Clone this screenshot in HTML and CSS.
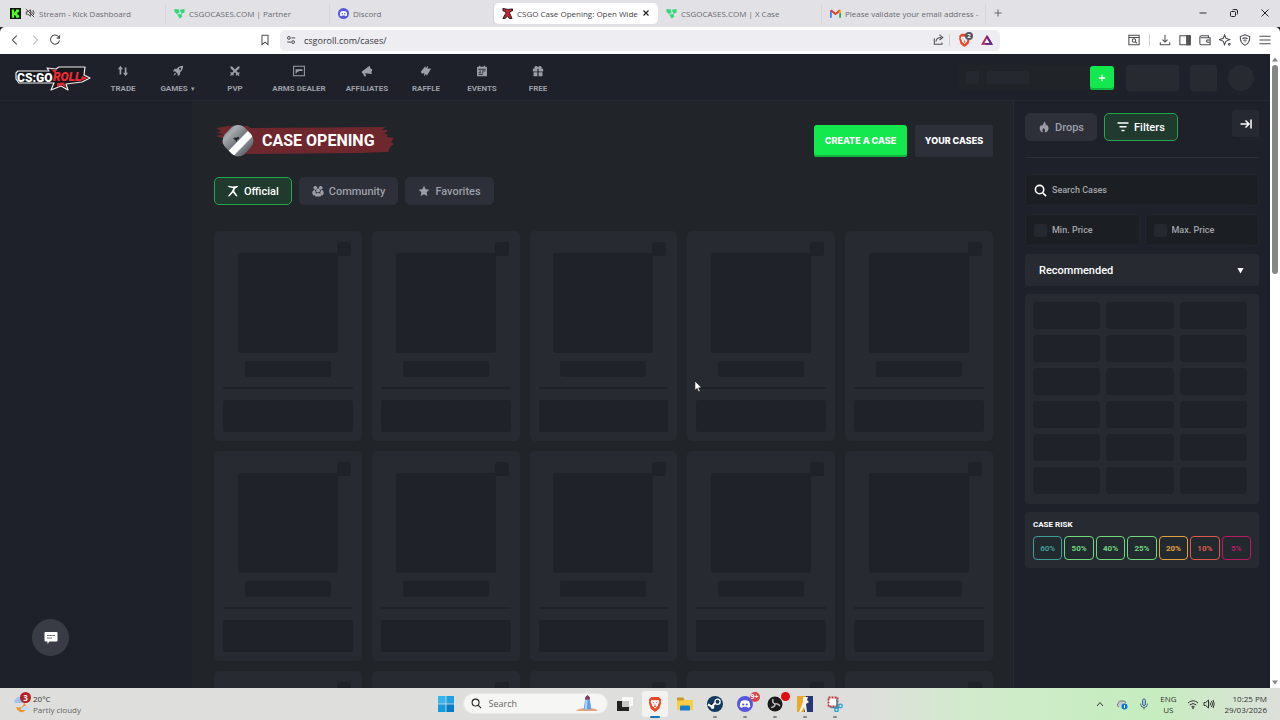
FILE: index.html
```html
<!DOCTYPE html>
<html lang="en">
<head>
<meta charset="utf-8">
<title>CSGO Case Opening</title>
<link rel="stylesheet" href="styles.css">
</head>
<body>
<svg class="defs" aria-hidden="true">
  <symbol id="trefoil" viewBox="0 0 12 12"><path d="M.5 1l5 .5L6 5.500 3 6.500.5 4zM6.500 2L11.500 1v4L8 6.500zM3.500 7l4.500-.5L9 9.500l-3 2z" fill="#35d878"/></symbol>
  <symbol id="discord" viewBox="0 0 16 16"><circle cx="8" cy="8" r="8" fill="#5558dc"/><path d="M4 5.200Q8 3.500 12 5.200 13.500 8 13.200 10.800L11 12l-.8-1.200H5.800L5 12l-2.200-1.200Q2.500 8 4 5.200z" fill="#fff"/><circle cx="6.200" cy="8.500" r="1.100" fill="#5558dc"/><circle cx="9.800" cy="8.500" r="1.100" fill="#5558dc"/></symbol>
  <symbol id="brave" viewBox="0 0 16 18"><path d="M4 1h8l1.500 1.500L15 4l-.6 2 .6 1-2 7-5 4-5-4L1 7l.6-1L1 4l1.500-1.500z" fill="#ee4623"/><path d="M4 4.500l3 .3h2l3-.3 1 2.500-1.800 2.800.3 1.200L8 14l-3.500-3 .3-1.200L3 7z" fill="#fff"/><path d="M5 6.500l2 .8-.5 1zM11 6.500l-2 .8.5 1zM8 8l.6 2.500H7.400zM6.200 11.300L8 10.600l1.800.7L8 12.600z" fill="#ee4623"/></symbol>
  <symbol id="runner" viewBox="0 0 12 12"><path d="M.5.800L6 1.500 11.500.8 10 2.500 8 3.800 7.200 6l3.500 5.200H9L6 7.500l-3.500 3.700H.8L4.700 6.500 6.300 3.200 2 2.300z"/></symbol>
</svg>

<header class="tabstrip">
  <div class="tab">
    <svg class="fav" viewBox="0 0 12 12"><path d="M0 0h12v12H0z" fill="#071407"/><path d="M2 1.500h2.500v3h1V3.500h1v-2H10V4H9v1H8v2h1v1h1v2.500H6.500v-2h-1v-1h-1v3H2z" fill="#4cff20"/></svg>
    <svg class="mute" viewBox="0 0 12 12" fill="none" stroke="#444" stroke-width="1.100"><path d="M1.500 4.500h2L6.500 2v8l-3-2.500h-2zM8 4q1.500 2 0 4M1 1l10 10M9.500 2.500q2.500 3 .5 6" /></svg>
    <span>Stream - Kick Dashboard</span>
  </div>
  <div class="tab"><svg class="fav"><use href="#trefoil"/></svg><span>CSGOCASES.COM | Partner</span></div>
  <div class="tab"><svg class="fav"><use href="#discord"/></svg><span>Discord</span></div>
  <div class="tab active">
    <svg class="fav" viewBox="0 0 12 12"><path d="M1 .5l5.500 1L11.500 1v2L8.500 4v2l2.500 5.500H8L6 8.500l-2.500 3H1L4 6V4L1 3z" fill="#c52730" stroke="#221518"/></svg>
    <span>CSGO Case Opening: Open Wide</span>
    <button class="plain close" aria-label="Close tab"><svg viewBox="0 0 8 8"><path d="M1.500 1.500l5 5m0-5l-5 5" stroke="#222" stroke-width="1.200"/></svg></button>
  </div>
  <div class="tab"><svg class="fav"><use href="#trefoil"/></svg><span>CSGOCASES.COM | X Case</span></div>
  <div class="tab"><svg class="fav" viewBox="0 0 12 12"><path d="M1 10.500V2.500" stroke="#4285f4" stroke-width="2"/><path d="M11 10.500V2.500" stroke="#34a853" stroke-width="2"/><path d="M1 2.500l5 4 5-4" stroke="#e33b2e" stroke-width="2.200" fill="none"/><path d="M10 3.200l2-1.400v3l-2 1.200z" fill="#fbbc04"/></svg><span>Please validate your email address -</span></div>
  <button class="plain newtab" aria-label="New tab"><svg viewBox="0 0 10 10"><path d="M5 1.500v7M1.500 5h7" stroke="#666"/></svg></button>
  <div class="wincontrols">
    <button class="plain" aria-label="Minimize"><svg viewBox="0 0 10 10"><path d="M1.500 5h7" stroke="#333"/></svg></button>
    <button class="plain" aria-label="Restore"><svg viewBox="0 0 10 10" fill="none" stroke="#222"><rect x="1.500" y="3.500" width="5" height="5" rx="1"/><path d="M3.500 2q.3-.5 1-.5h2.500q1.500 0 1.500 1.500v2.500q0 .7-.5 1"/></svg></button>
    <button class="plain" aria-label="Close"><svg viewBox="0 0 10 10"><path d="M1.500 1.500l7 7m0-7l-7 7" stroke="#222"/></svg></button>
  </div>
</header>

<nav class="toolbar" aria-label="Browser">
  <div class="history">
    <button class="plain" aria-label="Back"><svg viewBox="0 0 14 14"><path d="M9 2L4 7l5 5" /></svg></button>
    <button class="plain dim" aria-label="Forward"><svg viewBox="0 0 14 14"><path d="M5 2l5 5-5 5" /></svg></button>
    <button class="plain" aria-label="Reload"><svg viewBox="0 0 14 14"><path d="M12 4.500A5.300 5.300 0 1 0 12.300 7.500M12.300 1.500v3.300H9"/></svg></button>
    <button class="plain bookmark" aria-label="Bookmark"><svg viewBox="0 0 14 14"><path d="M3.500 1.500h7v11L7 9.500l-3.500 3z"/></svg></button>
  </div>
  <div class="address">
    <svg viewBox="0 0 12 12"><path d="M6.500 3.500H11M1.500 8.500H6"/><circle cx="3.500" cy="3.500" r="1.700"/><circle cx="8.500" cy="8.500" r="1.700"/></svg>
    <input type="text" aria-label="Address" value="csgoroll.com/cases/">
    <button class="plain share" aria-label="Share"><svg viewBox="0 0 14 14"><path d="M1.500 5v7h9v-2M3.500 9q0-5 6-5M7.500 1l4 3-4 3"/></svg></button>
    <span class="vr"></span>
    <span class="shield"><svg><use href="#brave"/></svg><b>2</b></span>
    <svg class="bat" viewBox="0 0 14 14"><path d="M7 3L2 11.500h10z" stroke="#b02353" stroke-width="2.200"/><path d="M7 3l5 8.500H5" stroke="#5d2b8b" stroke-width="2.200"/></svg>
  </div>
  <div class="tools">
    <button class="plain" aria-label="Search page"><svg viewBox="0 0 14 14"><path d="M1 1.500h12v11H1zM1 4h12"/><circle cx="7" cy="7.500" r="2"/><path d="M8.500 9l2 2"/></svg></button>
    <span class="vr"></span>
    <button class="plain" aria-label="Downloads"><svg viewBox="0 0 14 14"><path d="M7 1v8M4 6.500l3 3 3-3M1.500 9.500v3h11v-3"/></svg></button>
    <button class="plain" aria-label="Sidebar"><svg viewBox="0 0 14 14"><path d="M1 2h12v10.500H1z"/><path d="M9 2h4v10.500H9z" fill="#555"/></svg></button>
    <button class="plain" aria-label="Wallet"><svg viewBox="0 0 14 14"><path d="M11 4.500V2H3Q1 2 1 4v7q0 1.500 1.500 1.500H13v-8H2M13 7H9.500q-1.300 1.200 0 2.500H13z"/></svg></button>
    <button class="plain" aria-label="AI assistant"><svg viewBox="0 0 14 14"><path d="M6.500 1L8 5l4.500 1.500L8 8.500l-1.500 4L5 8.500 .5 6.500 5 5z"/><circle cx="12" cy="12" r="1"/></svg></button>
    <button class="plain" aria-label="VPN"><svg viewBox="0 0 14 14"><path d="M7 .8L12.500 3q.5 7.500-5.500 10.300Q1 10.500 1.500 3z"/><path d="M4 5.500q3-2 6 0M5 7.500q2-1.200 4 0M6.300 9h1.400"/></svg></button>
    <button class="plain" aria-label="Menu"><svg viewBox="0 0 14 14"><path d="M.5 2.500h13M.5 7h13M.5 11.500h13"/></svg></button>
  </div>
</nav>

<div class="viewport">
  <div class="site">
    <header class="sitebar">
      <a class="logo" href="#" aria-label="CSGORoll">
        <svg viewBox="0 0 76 28">
          <path d="M3 7h31l-2-3 9 1 3-2h26l-1 8 6 3-8 4-16 2 2 6-7-4-10 4 3-7H4l-3-4V9z" fill="#15171c" stroke="#f2eeee" stroke-width="1.200" stroke-linejoin="round"/>
          <path d="M36 5.500l6 .5-2 3zM42 19l7-.5 2 5-4-2.500-5 2zM67 12l6 2-8 3z" fill="#df2832"/>
          <text x="2" y="18" class="logo-main">CS:GO</text>
          <text x="38" y="17" class="logo-roll">ROLL</text>
        </svg>
      </a>
      <nav class="sitenav" aria-label="Main">
        <a href="#"><svg viewBox="0 0 14 14"><path d="M4 1L1 5h2v6h2V5h2zM10 13l3-4h-2V3H9v6H7z"/></svg>TRADE</a>
        <a href="#"><svg viewBox="0 0 14 14"><path d="M13 1Q8 1 5.500 4.500H3L1 7.500l2.500-.3 3.300 3.300L6.500 13l3-2V8.500Q13 6 13 1zM3.500 9L1.500 12.500 5 10.500z"/><circle cx="9.500" cy="4.500" r="1.200" fill="#1e2129"/></svg><span>GAMES <i>▼</i></span></a>
        <a href="#"><svg viewBox="0 0 14 14"><path d="M1.500 1.500L4 2l3 3.300L10 2l2.500-.5L12 4 8.700 7l2 2 1-.7 .8.900-1.200 1.300 1 1.500-1 .8-1.300-1.200-1.500 1-.7-.8.800-1.200L7 8.600 5 10.600l.7 1.200-.8.700-1.400-1L2.200 12.700l-1-.9 1.200-1.300L1.400 9l.9-.8 1.200.8L5.300 7 2 4z"/></svg>PVP</a>
        <a href="#"><svg viewBox="0 0 14 14"><path d="M.7 1.500h12.600v11H.7z" fill="none" stroke="#9c9fa7" stroke-width="1.200"/><path d="M3 5h8v2H7L6 8H5L4 10H3z"/></svg>ARMS DEALER</a>
        <a href="#"><svg viewBox="0 0 14 14"><path d="M1 7.500L10 1l1 3 2 1v2l-1 .8.8 2.700L5 9.500 6 13H3.500l-1-3.500H1z"/></svg>AFFILIATES</a>
        <a href="#"><svg viewBox="0 0 14 14"><path d="M1 8l5-6.500.8 2L9.500 1 9 4.500 13 4 8 12.500l-1-2L4.500 13 5 9.500 2 10z"/></svg>RAFFLE</a>
        <a href="#"><svg viewBox="0 0 14 14"><path d="M2 2h1.500V1H5v1h4V1h1.500v1H12q.8 0 .8.800V13H1.200V2.800Q1.200 2 2 2z"/><path d="M2.500 5h9M4 7h2M7 7h4M3 9h3M7 9h1.500M3 11h5" stroke="#1e2129"/></svg>EVENTS</a>
        <a href="#"><svg viewBox="0 0 14 14"><path d="M1 4.500h2Q2 1 5 1.200 6.500 1.500 7 3 7.500 1.500 9 1.200 12 1 11 4.500h2v3H7.700V4.500H6.300v3H1zM1.800 8.500h4.500V13H1.800zM7.700 8.500h4.500V13H7.700z"/></svg>FREE</a>
      </nav>
      <div class="account">
        <div class="balance"><span class="coin"></span><span class="amount"></span></div>
        <button class="deposit" aria-label="Deposit"><svg viewBox="0 0 10 10"><path d="M5 1v8M1 5h8" stroke="#fff" stroke-width="1.600"/></svg></button>
        <span class="ph wide"></span><span class="ph"></span><span class="ph avatar"></span>
      </div>
    </header>

    <div class="columns">
      <div class="rail">
        <button class="chat" aria-label="Open chat"><svg viewBox="0 0 16 16"><path d="M2.500 2h11q1 0 1 1v7.500q0 1-1 1H6.500L4.500 14v-2.500h-2q-1 0-1-1V3q0-1 1-1z" fill="#fff"/><path d="M4 5.500h8M4 8h5" stroke="#777a82"/></svg></button>
      </div>

      <main>
        <div class="heading">
          <div class="title">
            <svg class="brush" viewBox="0 0 182 34" preserveAspectRatio="none"><path d="M2 4l12-2h20l3 2 136-1-3 3h6l-4 4h3v3l7 1-3 4 3 2-4 3-2 5-30 1-106 1H33L24 22 6 19l8-3L2 12l8-2-8-1 5-2z" fill="#6f272e"/></svg>
            <svg class="knife" viewBox="0 0 34 34"><defs><linearGradient id="steel" x1="0" y1="0" x2="1" y2="1"><stop offset="0" stop-color="#444a50"/><stop offset=".25" stop-color="#a8adb2"/><stop offset=".5" stop-color="#74797f"/><stop offset=".51" stop-color="#fff"/><stop offset=".66" stop-color="#fff"/><stop offset=".67" stop-color="#858a8f"/><stop offset="1" stop-color="#30353a"/></linearGradient></defs><path d="M17 1q5 0 8 4l5 5q5 7 0 13l-6 7q-7 5-13 0L4 23q-5-6 0-13l5-5q3-4 8-4z" fill="url(#steel)"/><path d="M12 14l6-1v2l-2 1v2l-2-2z" fill="#24282c"/></svg>
            <h1>CASE OPENING</h1>
          </div>
          <button class="create">CREATE A CASE</button>
          <button class="yours">YOUR CASES</button>
        </div>
        <div class="pills">
          <button class="pill on"><svg><use href="#runner"/></svg>Official</button>
          <button class="pill"><svg viewBox="0 0 12 12"><circle cx="3.300" cy="2.800" r="1.900"/><circle cx="8.700" cy="2.800" r="1.900"/><circle cx="6" cy="5.500" r="2"/><path d="M.3 8Q.3 5 3 5l.8 3-.8 2.200H1zM11.700 8Q11.700 5 9 5l-.8 3 .8 2.200h2zM3 10.500Q3 8 6 8t3 2.500L8.500 11.500h-5z"/></svg>Community</button>
          <button class="pill"><svg viewBox="0 0 12 12"><path d="M6 .8l1.600 3.400 3.800.5-2.800 2.600.7 3.800L6 9.200l-3.300 1.900.7-3.800L.6 4.700l3.800-.5z"/></svg>Favorites</button>
        </div>
        <div class="cases" id="cases"></div>
      </main>

      <aside>
        <div class="switch">
          <button class="pill"><svg viewBox="0 0 12 12"><path d="M6.500.5Q5 4 4 5L3 4Q1 6 1.800 8.500 2.500 11 5 11.500 3.500 9 5.500 7q.5 1 1.300 1.200.7 1.500-.3 3.300Q10 11 10.500 8 10.500 5.500 9 3.500L8 5Q8 2 6.500.5z"/></svg>Drops</button>
          <button class="pill on"><svg viewBox="0 0 12 12"><path d="M.5 2h11M2.500 5.800h7M4.500 9.500h3" stroke="#fff" stroke-width="1.500"/></svg>Filters</button>
          <button class="collapse" aria-label="Collapse panel"><svg viewBox="0 0 12 12"><path d="M.5 6h8M5.500 2.500L9 6 5.500 9.500M11 1.500v9" fill="none" stroke="#fff" stroke-width="1.500"/></svg></button>
        </div>
        <div class="filters">
          <label class="field"><svg viewBox="0 0 14 14"><circle cx="6" cy="6" r="4.500"/><path d="M9.500 9.500L13 13"/></svg><input type="text" placeholder="Search Cases" aria-label="Search Cases"></label>
          <div class="prices">
            <label class="field"><span class="coin"></span><input type="text" placeholder="Min. Price" aria-label="Min. Price"></label>
            <label class="field"><span class="coin"></span><input type="text" placeholder="Max. Price" aria-label="Max. Price"></label>
          </div>
          <div class="sort"><select aria-label="Sort"><option>Recommended</option></select><svg viewBox="0 0 8 8"><path d="M.5 1h7L4 7.500z" fill="#fff"/></svg></div>
          <div class="swatches" id="swatches"></div>
          <section class="risk">
            <h2>CASE RISK</h2>
            <div class="chips">
              <button class="r60">60%</button><button class="r50">50%</button><button class="r50">40%</button><button class="r50">25%</button><button class="r20">20%</button><button class="r10">10%</button><button class="r5">5%</button>
            </div>
          </section>
        </div>
      </aside>
    </div>
  </div>
  <div class="scrollbar">
    <svg viewBox="0 0 10 10"><path d="M5 3l3 4H2z"/></svg>
    <span class="thumb"></span>
    <svg viewBox="0 0 10 10"><path d="M5 7l3-4H2z"/></svg>
  </div>
</div>

<footer class="taskbar">
  <div class="weather">
    <span class="wicon"><svg viewBox="0 0 18 20"><path d="M3 13q8 2 8-5 5 7-1 10-5 1-7-5z" fill="#ee9327"/><path d="M2 9q-2-3 1-4 2-4 6-1 4 0 4 5z" fill="#9fc4ee"/><path d="M8 16q-1-3 2-3 2-3 4 0 4 0 3 3z" fill="#c3daf5"/></svg><b>3</b></span>
    <div>20°C<br><span>Partly cloudy</span></div>
  </div>
  <div class="apps">
    <button class="plain app" aria-label="Start"><svg viewBox="0 0 16 16"><path d="M0 0h7.600v7.600H0z" fill="#35b5ec"/><path d="M8.400 0H16v7.600H8.400z" fill="#1ea0e2"/><path d="M0 8.400h7.600V16H0z" fill="#159bdc"/><path d="M8.400 8.400H16V16H8.400z" fill="#087bc6"/></svg></button>
    <label class="tasksearch"><svg viewBox="0 0 12 12" fill="none" stroke="#222" stroke-width="1.200"><circle cx="5" cy="5" r="3.800"/><path d="M7.800 7.800L11 11"/></svg><input type="text" placeholder="Search" aria-label="Search Windows"><svg class="lighthouse" viewBox="0 0 24 18"><path d="M0 17q3-3 8-3h8q5 0 7 3z" fill="#e4a57c"/><path d="M8 15L9.500 5h5L16 15z" fill="#5b9df0"/><path d="M10 5h2l-.5 10H9z" fill="#a9d4ff"/><path d="M9.500 2.500L12 0l2.500 2.500V5h-5z" fill="#803a65"/></svg></label>
    <button class="plain app" aria-label="Task view"><svg viewBox="0 0 16 16"><path d="M5 1h11v9H5z" fill="#fafafa"/><path d="M0 5h12v10H0z" fill="#222"/><path d="M5 5h7v6H5z" fill="#c8c8c7"/></svg></button>
    <button class="plain app current" aria-label="Brave"><svg><use href="#brave"/></svg></button>
    <button class="plain app" aria-label="File Explorer"><svg viewBox="0 0 16 16"><path d="M0 2h6l2 2h8v10H0z" fill="#f8cc46"/><path d="M0 1.500h6L7.500 3 6 4.500H0z" fill="#c99a23"/><path d="M3 10.500q0-1 1-1h8q1 0 1 1v4H3z" fill="#1780ce"/></svg></button>
    <button class="plain app run" aria-label="Steam"><svg viewBox="0 0 16 16"><circle cx="8" cy="8" r="8" fill="#14395f"/><path d="M1 8.500l4 2 3-3.500" stroke="#fff" stroke-width="2"/><circle cx="10.500" cy="5.700" r="2.600" fill="none" stroke="#fff" stroke-width="1.300"/><circle cx="5.500" cy="11" r="1.900" fill="#fff"/></svg></button>
    <button class="plain app run" aria-label="Discord"><svg><use href="#discord"/></svg><b>9+</b></button>
    <button class="plain app run" aria-label="OBS"><svg viewBox="0 0 16 16"><circle cx="8" cy="8" r="7.500" fill="#1a1a1c"/><path d="M8 8Q5 7 6 3M8 8q3-1 5 2M8 8q0 3-4 3.500" stroke="#bbb" stroke-width="1.500" fill="none"/></svg><b class="dot"></b></button>
    <button class="plain app run" aria-label="Counter-Strike 2"><svg viewBox="0 0 16 16"><path d="M0 0h9v16H0z" fill="#eba92b"/><path d="M9 0h7v16H7z" fill="#253874"/><path d="M6 1h5l-1 3 2 2-3 2 1 8H8L7 11l-3 5H2l3-7 1-4z" fill="#f7f4ed"/></svg></button>
    <button class="plain app run" aria-label="Snipping Tool"><svg viewBox="0 0 16 16"><rect x="1.500" y="1.500" width="9" height="9" fill="#fff" stroke="#ba3438" stroke-width="1.800" stroke-dasharray="2 1"/><path d="M10 3v8M4 11.500h8" stroke="#507f9c" stroke-width="1.500"/><circle cx="13.500" cy="10" r="1.800" fill="none" stroke="#26a1d3" stroke-width="1.300"/><circle cx="9.500" cy="13.800" r="1.800" fill="none" stroke="#26a1d3" stroke-width="1.300"/></svg></button>
  </div>
  <div class="tray">
    <svg viewBox="0 0 12 12"><path d="M3 8l3-3.500L9 8"/></svg>
    <svg viewBox="0 0 12 12"><path d="M3 9Q0 8 2 5.500 3 2 6 3q3-1 4 2" fill="#c4cbd1" stroke="#717983"/><circle cx="8.500" cy="8.500" r="3" fill="#0078d4" stroke="none"/><path d="M8.500 7v3" stroke="#fff"/></svg>
    <svg viewBox="0 0 12 12"><rect x="4.500" y="1" width="3" height="6.500" rx="1.500" fill="#9dc4dd" stroke="#496a88"/><path d="M2.500 5.500q0 4 3.500 4t3.500-4M6 9.500v2" stroke="#496a88"/></svg>
    <span class="lang">ENG<br>US</span>
    <span class="status">
      <svg viewBox="0 0 12 12"><path d="M1 5q5-4.500 10 0M2.700 7q3.300-3 6.600 0M4.400 8.800q1.600-1.400 3.200 0"/><circle cx="6" cy="10" r=".6"/></svg>
      <svg viewBox="0 0 12 12"><path d="M1 4.500h1.700L5.500 2v8L2.700 7.500H1zM7 4.500q1 1.500 0 3M8.500 3q2 3 0 6M10 2q2.500 4 0 8"/></svg>
    </span>
    <span class="clock">10:25 PM<br>29/03/2026</span>
  </div>
</footer>

<svg class="cursor" viewBox="0 0 10 14"><path d="M1 .8v10.500l2.500-2.200L5.200 13l1.700-.8L5.200 8.500h3.300z" fill="#fff" stroke="#111" stroke-width=".7"/></svg>
<script src="skeleton.js"></script>
</body>
</html>
```
FILE: styles.css
```css
* { box-sizing: border-box; }
body { margin: 0; height: 100vh; display: flex; flex-direction: column; overflow: hidden; font-family: Roboto, "Liberation Sans", sans-serif; background: #1e2129; }
.defs { position: absolute; width: 0; height: 0; }
button, input, select { font: inherit; color: inherit; }
button { border: 0; padding: 0; }
.plain { background: none; display: grid; place-items: center; flex: none; }
svg { display: block; flex: none; }

/* Browser tabs */
.tabstrip { height: 27px; flex: none; display: flex; align-items: center; padding: 0 0 1px 2px; background: #e1e1e6; font: 8px "Open Sans", "Noto Sans", sans-serif; color: #6c6c72; }
.tab { width: 164px; height: 21px; flex: 0 1 auto; display: flex; align-items: center; gap: 4px; padding: 0 8px; border-right: 1px solid #d6d6dc; white-space: nowrap; overflow: hidden; }
.tab.active { background: #fff; border: 0; border-radius: 5px; color: #3f3f44; }
.close { margin-left: auto; }
.fav { width: 11px; height: 11px; }
.mute { width: 10px; height: 10px; }
.close svg { width: 8px; height: 8px; }
.newtab { width: 24px; height: 24px; }
.newtab svg, .wincontrols svg { width: 10px; height: 10px; }
.wincontrols { margin-left: auto; display: flex; }
.wincontrols button { width: 31px; height: 24px; }

/* Browser toolbar */
.toolbar { height: 27px; flex: none; display: grid; grid-template-columns: 275px 1fr 275px; align-items: center; background: #fff; padding: 0 5px 1px; border-radius: 5px 5px 0 0; font: 9px "Open Sans", "Noto Sans", sans-serif; color: #38383d; }
.toolbar svg { width: 12px; height: 12px; fill: none; stroke: #4c4c52; stroke-width: 1.2; }
.history { display: flex; }
.history button, .tools button { width: 20px; height: 20px; }
.dim { opacity: .4; }
.history .bookmark { margin: 0 5px 0 auto; }
.address { height: 21px; display: flex; align-items: center; gap: 8px; padding: 0 7px 0 6px; background: #ededf2; border-radius: 5px; }
.toolbar .address > svg:first-child { width: 10px; height: 10px; }
.address input { flex: 1; min-width: 0; border: 0; padding: 0; background: none; }
.address .vr { margin: 0 0 0 -4px; }
.address .bat { margin-left: 2px; }
.vr { width: 1px; height: 12px; background: #cfcfd4; }
.shield { position: relative; }
.toolbar .shield svg { width: 13px; height: 14px; stroke: none; }
.shield b { position: absolute; left: 7px; top: -1px; width: 8px; height: 8px; border-radius: 4px; background: #55585f; color: #fff; font-size: 6px; line-height: 8px; text-align: center; }
.tools { display: flex; align-items: center; justify-content: flex-end; }
.tools .vr { margin: 0 5px; }

/* Page frame */
.viewport { flex: 1; min-height: 0; display: flex; }
.site { flex: 1; min-width: 0; display: flex; flex-direction: column; }
.scrollbar { width: 10px; background: #fff; display: flex; flex-direction: column; align-items: center; }
.scrollbar svg { width: 10px; height: 11px; fill: #858585; }
.thumb { width: 6px; height: 33%; margin-bottom: auto; border-radius: 3px; background: #858787; }

.sitebar { height: 47px; flex: none; display: flex; align-items: center; padding: 1px 16px 0 15px; background: #1e2129; border-bottom: 1px solid #24272d; }
.logo { width: 80px; }
.logo svg { width: 76px; height: 28px; }
.logo-main { font: 900 12px Roboto, sans-serif; fill: #fff; }
.logo-roll { font: italic 900 12px Roboto, sans-serif; fill: #f02b36; }
.sitenav { display: grid; grid-template-columns: 56px 54px 60px 68px 68px 50px 62px 50px; }
.sitenav a { display: flex; flex-direction: column; align-items: center; gap: 7px; padding-top: 3px; color: #9c9fa7; font-size: 8px; line-height: 10px; font-weight: 700; text-decoration: none; white-space: nowrap; }
.sitenav svg { width: 12px; height: 12px; fill: #9c9fa7; }
.sitenav i { font-size: 6px; font-style: normal; }
.account { margin-left: auto; display: flex; align-items: center; }
.balance { width: 132px; height: 26px; display: flex; align-items: center; gap: 8px; padding-left: 8px; background: #202328; border-radius: 4px; }
.coin { width: 13px; height: 13px; border-radius: 2px; background: #25282f; flex: none; }
.amount { width: 42px; height: 13px; border-radius: 2px; background: #25282f; }
.deposit { width: 24px; height: 24px; border-radius: 3px; background: #14e84f; box-shadow: inset 0 -2px #0fb53e; display: grid; place-items: center; margin-right: 12px; }
.deposit svg { width: 8px; height: 8px; }
.ph { width: 27px; height: 26px; border-radius: 3px; background: #272a31; margin-right: 11px; }
.ph.wide { width: 53px; }
.ph.avatar { width: 26px; border-radius: 50%; margin-right: 0; }

.columns { flex: 1; min-height: 0; display: flex; }
.rail { width: 192px; flex: none; display: flex; align-items: flex-end; padding: 0 0 32px 32px; background: #1e2129; }
.chat { width: 37px; height: 37px; border-radius: 50%; background: #3a3c45; display: grid; place-items: center; }
.chat svg { width: 16px; height: 16px; }

main { flex: 1; min-width: 0; overflow: hidden; padding: 23px 20px 0 22px; background: #212428; }
.heading { display: flex; align-items: center; gap: 8px; height: 33px; }
.title { flex: 1; display: grid; grid-template-columns: 48px 134px; align-items: center; }
.title > * { grid-row: 1; }
.brush { grid-column: 1 / 3; width: 180px; height: 34px; }
.knife { grid-column: 1; width: 34px; height: 34px; margin-left: 7px; }
h1 { grid-column: 2; margin: 0; font-size: 16px; line-height: 20px; font-weight: 700; color: #fff; white-space: nowrap; }
.create, .yours { height: 32px; border-radius: 3px; color: #fff; font: 800 9px Inter, Roboto, sans-serif; white-space: nowrap; }
.create { background: #14e84f; box-shadow: inset 0 -2px #0fb53e; width: 93px; }
.yours { background: #2e3039; width: 78px; }
.pills { display: flex; gap: 7px; margin-top: 20px; }
.pill { height: 28px; display: flex; align-items: center; gap: 5px; padding: 0 12px; border: 1px solid #2e3039; border-radius: 5px; background: #2e3039; color: #9c9fa9; font-size: 11px; font-weight: 500; }
.pill svg { width: 12px; height: 12px; fill: currentColor; }
.pill.on { color: #fff; background: #203a2e; border-color: #24a64c; }
.cases { display: grid; grid-template-columns: repeat(5, 1fr); gap: 10px; margin-top: 26px; }
.case { position: relative; height: 210px; padding: 22px 9px 9px; border-radius: 5px; background: #282a32; display: flex; flex-direction: column; align-items: center; }
.case span { background: #1f2228; border-radius: 3px; }
.case .tag { position: absolute; top: 11px; right: 11px; width: 14px; height: 14px; }
.case .art { width: 100px; height: 100px; }
.case .name { width: 86px; height: 16px; margin: 8px 0 10px; }
.case .rule { width: 100%; height: 2px; }
.case .price { width: 100%; height: 32px; margin-top: auto; }

aside { width: 257px; flex: none; padding: 9px 11px; background: #1e2129; border-left: 1px solid #272a30; }
.switch { display: flex; gap: 7px; align-items: center; padding: 3px 0 16px; border-bottom: 1px solid #2b2e35; margin-bottom: 16px; }
.collapse { width: 27px; height: 27px; margin: -7px 0 0 auto; border-radius: 3px; background: #262932; display: grid; place-items: center; }
.collapse svg { width: 12px; height: 12px; }
.filters { display: flex; flex-direction: column; gap: 8px; }
.field { height: 32px; min-width: 0; display: flex; align-items: center; gap: 5px; padding: 0 8px; background: #1b1e23; border: 1px solid #23262b; border-radius: 4px; color: #a3a5aa; font: 500 9px Roboto, sans-serif; }
.field svg { width: 13px; height: 13px; fill: none; stroke: #fff; stroke-width: 1.7; }
.field input { flex: 1; width: 0; border: 0; padding: 0; background: none; outline: 0; }
.field input::placeholder { color: #a3a5aa; opacity: 1; }
.prices { display: grid; grid-template-columns: 1fr 1fr; gap: 5px; }
.sort { height: 32px; display: flex; align-items: center; padding-right: 15px; background: #282a32; border-radius: 3px; }
.sort select { flex: 1; height: 32px; border: 0; padding: 0 14px; background: none; appearance: none; color: #fff; font-size: 11px; font-weight: 500; }
.sort svg { width: 7px; height: 7px; }
.swatches { display: grid; grid-template-columns: repeat(3, 1fr); gap: 6px; padding: 8px 12px 10px 8px; background: #282a32; border-radius: 4px; }
.swatches span { height: 27px; border-radius: 4px; background: #1f2228; }
.risk { padding: 8px; background: #282a32; border-radius: 4px; }
h2 { margin: 0 0 6px; color: #fff; font-size: 8px; line-height: 10px; font-weight: 700; }
.chips { display: grid; grid-template-columns: repeat(7, 1fr); gap: 2px; }
.chips button { height: 24px; border: 1px solid currentColor; border-radius: 4px; background: #222a30; font: 700 8px Roboto, sans-serif; }
.chips .r60 { color: #3b9f98; }
.chips .r50 { color: #70d87d; }
.chips .r20 { color: #e0a23e; }
.chips .r10 { color: #de594b; }
.chips .r5 { color: #b91b61; }

/* Windows taskbar */
.taskbar { height: 32px; flex: none; display: grid; grid-template-columns: 1fr auto 1fr; align-items: center; padding: 0 13px 1px; background: linear-gradient(90deg, #dedfdc 68%, #d1ebcc 76%, #c5edbe 90%, #d6e5d2 97%, #dcdfda); color: #333; font: 8px/11px "Open Sans", "Noto Sans", sans-serif; }
.weather { display: flex; align-items: center; gap: 2px; }
.weather div span { color: #666; }
.wicon { position: relative; }
.wicon svg { width: 18px; height: 20px; }
.wicon b { position: absolute; left: 7px; top: -2px; width: 11px; height: 11px; border-radius: 6px; background: #b42025; color: #fff; font-size: 8px; line-height: 11px; text-align: center; }
.apps { display: flex; align-items: center; gap: 4px; }
.app { position: relative; width: 26px; height: 26px; }
.app svg { width: 16px; height: 16px; }
.app.current { background: #f2f2f0; border-radius: 3px; }
.app.current::after, .app.run::after { content: ""; position: absolute; bottom: -1px; width: 10px; height: 2px; border-radius: 1px; background: #1676bd; }
.app.run::after { width: 4px; background: #858785; }
.app b { position: absolute; top: 1px; right: -2px; width: 10px; height: 10px; border-radius: 5px; background: #d9434c; color: #fff; font-size: 7px; line-height: 10px; text-align: center; }
.app .dot { width: 9px; height: 9px; background: #e00b10; }
.tasksearch { width: 145px; height: 21px; display: flex; align-items: center; gap: 7px; padding: 0 8px 0 7px; border-radius: 11px; background: #f6f6f4; border: 1px solid #e9e9e7; font-size: 9px; color: #666; }
.tasksearch > svg { width: 11px; height: 11px; }
.tasksearch input { flex: 1; width: 0; border: 0; padding: 0; background: none; }
.tasksearch input::placeholder { color: #666; opacity: 1; }
.tasksearch .lighthouse { width: 23px; height: 17px; }
.tray { display: flex; align-items: center; justify-content: flex-end; gap: 10px; }
.tray svg { width: 12px; height: 12px; fill: none; stroke: #333; }
.lang { text-align: center; }
.status { display: flex; gap: 4px; }
.clock { text-align: right; }

.cursor { position: absolute; left: 54.2%; top: 380px; width: 9px; height: 13px; }
```
FILE: skeleton.js
```js
const cases = document.getElementById("cases");
for (let i = 0; i < 15; i++) {
  cases.insertAdjacentHTML("beforeend",
    '<div class="case"><span class="tag"></span><span class="art"></span><span class="name"></span><span class="rule"></span><span class="price"></span></div>');
}
document.getElementById("swatches").innerHTML = "<span></span>".repeat(18);
```
